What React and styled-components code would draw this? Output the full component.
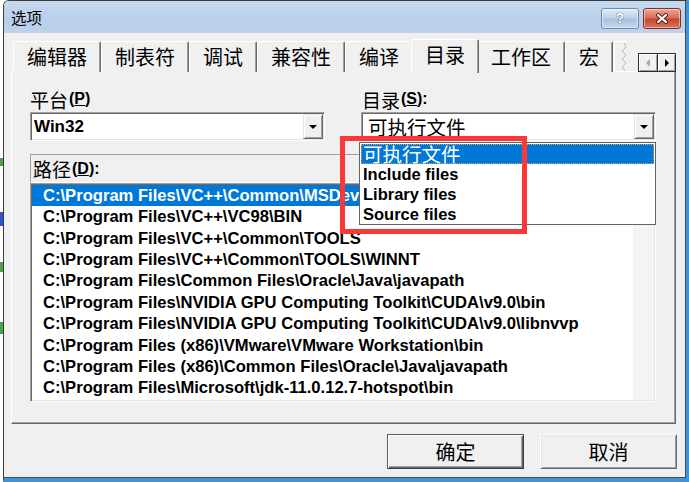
import React from "react";
import styled, { createGlobalStyle } from "styled-components";

const GlobalStyle = createGlobalStyle`
  html, body {
    margin: 0;
    padding: 0;
    background: #fff;
  }
  body {
    font-family: "Liberation Sans", "Noto Sans CJK SC", sans-serif;
    color: #000;
  }
`;

const tabs = ["编辑器", "制表符", "调试", "兼容性", "编译", "目录", "工作区", "宏"];

const paths = [
  "C:\\Program Files\\VC++\\Common\\MSDev98\\BIN",
  "C:\\Program Files\\VC++\\VC98\\BIN",
  "C:\\Program Files\\VC++\\Common\\TOOLS",
  "C:\\Program Files\\VC++\\Common\\TOOLS\\WINNT",
  "C:\\Program Files\\Common Files\\Oracle\\Java\\javapath",
  "C:\\Program Files\\NVIDIA GPU Computing Toolkit\\CUDA\\v9.0\\bin",
  "C:\\Program Files\\NVIDIA GPU Computing Toolkit\\CUDA\\v9.0\\libnvvp",
  "C:\\Program Files (x86)\\VMware\\VMware Workstation\\bin",
  "C:\\Program Files (x86)\\Common Files\\Oracle\\Java\\javapath",
  "C:\\Program Files\\Microsoft\\jdk-11.0.12.7-hotspot\\bin",
];

const dirOptions = ["可执行文件", "Include files", "Library files", "Source files"];

const Screen = styled.div`
  display: flex;
  width: 689px;
  height: 482px;
  overflow: hidden;
  background: #fff;
`;

const Backdrop = styled.div`
  width: 3px;
  background: linear-gradient(
    to bottom,
    #fff 0 158px,
    #4aa24a 158px 166px,
    #fff 166px 212px,
    #2a56c8 212px 226px,
    #fff 226px 262px,
    #4aa24a 262px 272px,
    #fff 272px 322px,
    #4aa24a 322px 334px,
    #fff 334px
  );
`;

const Frame = styled.div`
  flex: 1;
  display: flex;
  flex-direction: column;
  border-left: 1px solid #3c3c3c;
  border-top: 1px solid #3c3c3c;
  border-right: 3px solid #3f93d8;
  border-bottom: 4px solid #3f93d8;
  border-top-left-radius: 6px;
  overflow: hidden;
`;

const Inner = styled.div`
  flex: 1;
  display: flex;
  flex-direction: column;
  border-right: 1px solid #4a4a4a;
  border-bottom: 1px solid #4a4a4a;
`;

const TitleBar = styled.div`
  height: 32px;
  display: flex;
  align-items: center;
  padding: 0 4px 0 7px;
  background: linear-gradient(to bottom, #c6d9f0, #b9cfe9 60%, #bdd2eb);
`;

const Title = styled.div`
  flex: 1;
  font-family: "Noto Sans CJK SC", sans-serif;
  font-size: 15.5px;
  line-height: 1;
  padding-top: 1px;
`;

const CaptionButton = styled.div`
  width: 38px;
  height: 21px;
  box-sizing: border-box;
  margin-left: 4px;
  margin-top: 2px;
  border-radius: 3px;
  display: flex;
  align-items: center;
  justify-content: center;
  border: 1px solid ${(p) => (p.$close ? "#8b2b20" : "#6b88ad")};
  background: ${(p) =>
    p.$close
      ? "linear-gradient(to bottom, #eaa799, #d76a58 48%, #c5442f 52%, #d9765f)"
      : "linear-gradient(to bottom, #e2ecf8, #bed1e8 48%, #a8bfdc 52%, #c7d9ee)"};
  box-shadow: inset 0 0 0 1px rgba(255, 255, 255, 0.45);
`;

const HelpMark = styled.span`
  font-family: "Liberation Sans", sans-serif;
  font-weight: 700;
  font-size: 14px;
  color: #fff;
  text-shadow: 0 0 1px #3a4f6e, 0 0 1px #3a4f6e;
`;

const Client = styled.div`
  flex: 1;
  display: flex;
  flex-direction: column;
  background: #f0f0f0;
  padding: 6px 9px 0 7px;
`;

const TabStrip = styled.div`
  height: 33px;
  display: flex;
  align-items: flex-end;
  padding-left: 2px;
  position: relative;
  z-index: 2;
`;

const Tab = styled.div`
  box-sizing: border-box;
  height: ${(p) => (p.$active ? "34px" : "31px")};
  margin: ${(p) => (p.$active ? "0 -2px -1px" : "0")};
  padding: 0 13px;
  display: flex;
  align-items: center;
  justify-content: center;
  background: #f0f0f0;
  border-top: 1px solid #fff;
  border-left: 1px solid #fff;
  border-right: 1px solid #696969;
  box-shadow: inset -1px 0 #a0a0a0;
  border-radius: 2px 2px 0 0;
  font-family: "Noto Sans CJK SC", sans-serif;
  font-size: 20px;
  line-height: 1;
  position: relative;
  z-index: ${(p) => (p.$active ? 3 : 1)};
  padding-bottom: ${(p) => (p.$active ? "3px" : "0")};
`;

const ClippedTab = styled.div`
  box-sizing: border-box;
  width: 13px;
  height: 31px;
  border-top: 1px solid #fff;
  border-left: 1px solid #fff;
  margin-left: 1px;
  display: flex;
  justify-content: flex-end;
`;

const Spacer = styled.div`
  flex: 1;
`;

const ScrollPair = styled.div`
  display: flex;
  border: 1px solid #2e2e2e;
`;

const ScrollButton = styled.div`
  width: 18px;
  height: 17px;
  box-sizing: border-box;
  display: flex;
  align-items: center;
  justify-content: center;
  background: #f0f0f0;
  box-shadow: inset 1px 1px #fff, inset -1px -1px #a0a0a0;
  & + & {
    border-left: 1px solid #2e2e2e;
  }
`;

const Triangle = styled.span`
  width: 0;
  height: 0;
  border-top: 4px solid transparent;
  border-bottom: 4px solid transparent;
  ${(p) =>
    p.$dir === "left"
      ? `border-right: 4px solid ${p.$disabled ? "#a8a8a8" : "#000"};`
      : `border-left: 4px solid ${p.$disabled ? "#a8a8a8" : "#000"};`}
`;

const Panel = styled.div`
  box-sizing: border-box;
  height: 353px;
  margin-top: -1px;
  border-top: 1px solid #fff;
  border-left: 1px solid #fff;
  border-right: 1px solid #696969;
  border-bottom: 1px solid #696969;
  box-shadow: inset -1px -1px #a0a0a0;
  padding: 17px 19px 0 18px;
  display: grid;
  grid-template-columns: 295px 1fr;
  align-content: start;
  column-gap: 36px;
  position: relative;
  z-index: 1;
`;

const Field = styled.div`
  display: flex;
  flex-direction: column;
`;

const Label = styled.div`
  height: 20px;
  display: flex;
  align-items: center;
  font-family: "Noto Sans CJK SC", sans-serif;
  font-size: 19px;
  line-height: 1;
  margin-bottom: 3px;
  padding-left: ${(p) => p.$indent || 0}px;
`;

const Key = styled.span`
  font-family: "Liberation Sans", sans-serif;
  font-weight: 700;
  font-size: 16px;
  margin-left: 1px;
`;

const Combo = styled.div`
  position: relative;
  height: 29px;
  box-sizing: border-box;
  display: flex;
  align-items: center;
  background: #fff;
  border: 1px solid;
  border-color: #a0a0a0 #fff #fff #a0a0a0;
  box-shadow: inset 1px 1px #696969, inset -1px -1px #e3e3e3;
  padding-left: 3px;
`;

const ComboText = styled.div`
  flex: 1;
  font-family: ${(p) =>
    p.$cjk ? `"Noto Sans CJK SC", sans-serif` : `"Liberation Sans", sans-serif`};
  font-weight: ${(p) => (p.$cjk ? 400 : 700)};
  font-size: ${(p) => (p.$cjk ? "19.5px" : "17px")};
  line-height: 1;
  padding-left: ${(p) => (p.$cjk ? "3px" : "0")};
`;

const ArrowButton = styled.div`
  width: 20px;
  height: 25px;
  box-sizing: border-box;
  margin-right: 1px;
  display: flex;
  align-items: center;
  justify-content: center;
  background: #f0f0f0;
  border: 1px solid;
  border-color: #e3e3e3 #696969 #696969 #e3e3e3;
  box-shadow: inset 1px 1px #fff, inset -1px -1px #a0a0a0;
`;

const DownTriangle = styled.span`
  width: 0;
  height: 0;
  border-left: 4px solid transparent;
  border-right: 4px solid transparent;
  border-top: 4px solid #000;
  margin-top: 1px;
`;

const Dropdown = styled.div`
  position: absolute;
  left: -3px;
  top: 29px;
  width: 297px;
  height: 83px;
  box-sizing: border-box;
  background: #fff;
  border: 1px solid #646464;
  padding: 1px 1px 0;
  z-index: 5;
`;

const Option = styled.div`
  height: 20px;
  box-sizing: border-box;
  display: flex;
  align-items: center;
  padding-left: 2px;
  font-family: ${(p) =>
    p.$cjk ? `"Noto Sans CJK SC", sans-serif` : `"Liberation Sans", sans-serif`};
  font-weight: ${(p) => (p.$cjk ? 400 : 700)};
  font-size: ${(p) => (p.$cjk ? "19.5px" : "16.5px")};
  line-height: 1;
  background: ${(p) => (p.$selected ? "#0078d7" : "transparent")};
  color: ${(p) => (p.$selected ? "#fff" : "#000")};
  outline: ${(p) => (p.$selected ? "1px dotted #e2a34a" : "none")};
  outline-offset: -1px;
`;

const Callout = styled.div`
  position: absolute;
  left: -22px;
  top: 23px;
  width: 187px;
  height: 98px;
  box-sizing: border-box;
  border: 5px solid #fa3838;
  z-index: 6;
  pointer-events: none;
`;

const PathBlock = styled.div`
  grid-column: 1 / -1;
  margin-top: 13px;
  display: flex;
  flex-direction: column;
`;

const PathHeader = styled.div`
  height: 29px;
  box-sizing: border-box;
  display: flex;
  align-items: center;
  padding-left: 2px;
  border: 1px solid;
  border-color: #a0a0a0 #fff #fff #a0a0a0;
  font-family: "Noto Sans CJK SC", sans-serif;
  font-size: 19px;
  line-height: 1;
`;

const PathList = styled.div`
  height: 219px;
  box-sizing: border-box;
  display: flex;
  background: #fff;
  border: 1px solid;
  border-color: #a0a0a0 #fff #fff #a0a0a0;
  box-shadow: inset 1px 1px #696969, inset -1px -1px #e3e3e3;
  padding: 1px;
`;

const Rows = styled.div`
  flex: 1;
  display: flex;
  flex-direction: column;
`;

const Row = styled.div`
  height: 21.4px;
  flex-shrink: 0;
  display: flex;
  align-items: center;
  padding: 1px 0 0 11px;
  box-sizing: border-box;
  white-space: nowrap;
  font-family: "Liberation Sans", sans-serif;
  font-weight: 700;
  font-size: 16.6px;
  line-height: 1;
  background: ${(p) => (p.$selected ? "#0078d7" : "transparent")};
  color: ${(p) => (p.$selected ? "#fff" : "#000")};
`;

const Strip = styled.div`
  width: 21px;
  background: #f4f4f4;
`;

const Footer = styled.div`
  display: flex;
  justify-content: flex-end;
  gap: 16px;
  margin-top: 10px;
  margin-right: -1px;
`;

const Button = styled.div`
  width: 137px;
  height: 35px;
  box-sizing: border-box;
  display: flex;
  align-items: center;
  justify-content: center;
  background: #f0f0f0;
  border: 1px solid;
  border-color: ${(p) =>
    p.$default ? "#5a5a5a #3c3c3c #3c3c3c #5a5a5a" : "#fff #696969 #696969 #fff"};
  box-shadow: ${(p) =>
    p.$default
      ? "inset 1px 1px #fff, inset -1px -1px #696969, inset -2px -2px #a0a0a0"
      : "inset 1px 1px #e3e3e3, inset -1px -1px #a0a0a0"};
  font-family: "Noto Sans CJK SC", sans-serif;
  font-size: 20px;
  line-height: 1;
`;

const CloseGlyph = () => (
  <svg width="14" height="11" viewBox="0 0 14 11">
    <path d="M3 2 L11 9 M11 2 L3 9" stroke="#5a1a12" strokeWidth="4" strokeLinecap="round" />
    <path d="M3 2 L11 9 M11 2 L3 9" stroke="#fff" strokeWidth="2.2" strokeLinecap="round" />
  </svg>
);

const Zigzag = () => (
  <svg width="6" height="30" viewBox="0 0 6 30">
    <path
      d="M3 1 L5 5 L1 9 L5 13 L1 17 L5 21 L1 25 L4 29"
      fill="none"
      stroke="#b8b8b8"
      strokeWidth="1"
    />
  </svg>
);

export default function App() {
  return (
    <>
      <GlobalStyle />
      <Screen>
        <Backdrop />
        <Frame>
          <Inner>
            <TitleBar>
              <Title>选项</Title>
              <CaptionButton>
                <HelpMark>?</HelpMark>
              </CaptionButton>
              <CaptionButton $close>
                <CloseGlyph />
              </CaptionButton>
            </TitleBar>
            <Client>
              <TabStrip>
                {tabs.map((t) => (
                  <Tab key={t} $active={t === "目录"}>
                    {t}
                  </Tab>
                ))}
                <ClippedTab>
                  <Zigzag />
                </ClippedTab>
                <Spacer />
                <ScrollPair>
                  <ScrollButton>
                    <Triangle $dir="left" $disabled />
                  </ScrollButton>
                  <ScrollButton>
                    <Triangle $dir="right" />
                  </ScrollButton>
                </ScrollPair>
              </TabStrip>
              <Panel>
                <Field>
                  <Label>
                    平台
                    <Key>
                      (<u>P</u>)
                    </Key>
                  </Label>
                  <Combo>
                    <ComboText>Win32</ComboText>
                    <ArrowButton>
                      <DownTriangle />
                    </ArrowButton>
                  </Combo>
                </Field>
                <Field>
                  <Label $indent={1}>
                    目录
                    <Key>
                      (<u>S</u>):
                    </Key>
                  </Label>
                  <Combo>
                    <ComboText $cjk>可执行文件</ComboText>
                    <ArrowButton>
                      <DownTriangle />
                    </ArrowButton>
                    <Dropdown>
                      {dirOptions.map((o, i) => (
                        <Option key={o} $cjk={i === 0} $selected={i === 0}>
                          {o}
                        </Option>
                      ))}
                    </Dropdown>
                    <Callout />
                  </Combo>
                </Field>
                <PathBlock>
                  <PathHeader>
                    路径
                    <Key>
                      (<u>D</u>):
                    </Key>
                  </PathHeader>
                  <PathList>
                    <Rows>
                      {paths.map((p, i) => (
                        <Row key={p} $selected={i === 0}>
                          {p}
                        </Row>
                      ))}
                    </Rows>
                    <Strip />
                  </PathList>
                </PathBlock>
              </Panel>
              <Footer>
                <Button $default>确定</Button>
                <Button>取消</Button>
              </Footer>
            </Client>
          </Inner>
        </Frame>
      </Screen>
    </>
  );
}
